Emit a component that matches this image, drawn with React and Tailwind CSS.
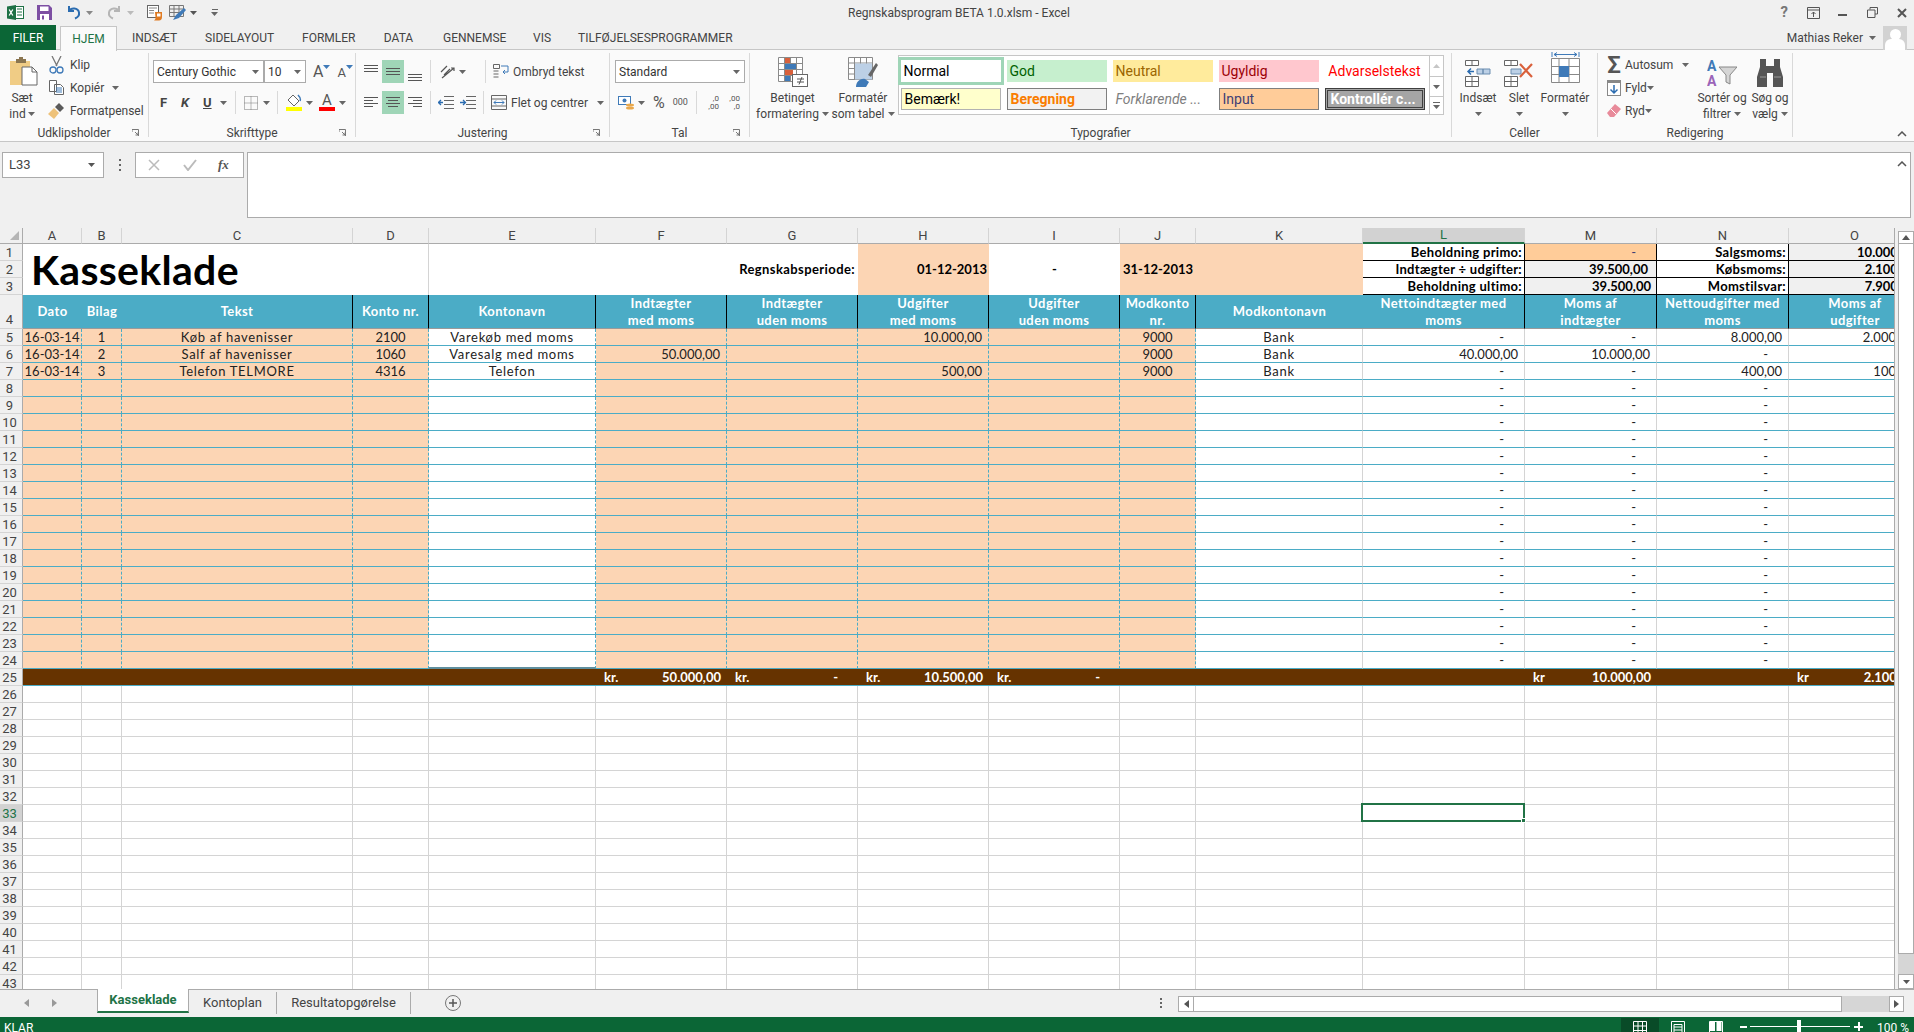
import React from 'react'
import clsx from 'clsx'

const Caret = ({ className, color = '#666' }) => (
    <svg width="7" height="4" viewBox="0 0 7 4" className={clsx('shrink-0', className)}>
        <path d="M0 0h7L3.5 4z" fill={color} />
    </svg>
)

// hairlines icon used all over the alignment group
const Lines = ({ rows, color = '#555', w = 15, h = 15 }) => (
    <svg width={w} height={h} viewBox={`0 0 ${w} ${h}`} className="shrink-0">
        {rows.map(([x, y, l], i) => <rect key={i} x={x} y={y} width={l} height="1" fill={color} />)}
    </svg>
)

const Launcher = () => (
    <svg width="7" height="7" viewBox="0 0 7 7">
        <path d="M0 .5h6.5V7M0 .5V3M3 3l3 3M3.5 6H6V3.5" fill="none" stroke="#777" strokeWidth="1" />
    </svg>
)

const Group = ({ className, label, launcher, children }) => (
    <div className={clsx('flex flex-col h-[84px] border-r border-[#d9d9d9] shrink-0', className)}>
        <div className="h-[72px] flex">{children}</div>
        <div className="h-[12px] flex leading-[16px] text-[12px] text-[#444]">
            <span className="w-[16px]" />
            <span className="flex-1 text-center">{label}</span>
            <span className="w-[16px] pt-[4px]">{launcher && <Launcher />}</span>
        </div>
    </div>
)

const Big = ({ icon, lines, caret, className }) => (
    <div className={clsx('flex flex-col items-center shrink-0 text-[12px] leading-[16px] text-[#444]', className)}>
        <div className="h-[37px] flex items-end justify-center pb-[3px]">{icon}</div>
        {lines.map((l, i) => (
            <div key={i} className="flex items-center gap-[3px] whitespace-nowrap h-[16px]">
                {l}
                {caret && i === lines.length - 1 && <Caret />}
            </div>
        ))}
        {lines.length === 1 && <div className="h-[16px] flex items-center"><Caret /></div>}
    </div>
)

const Small = ({ icon, text, caret, gap = 'gap-[5px]', caretClass }) => (
    <div className={clsx('flex items-center h-[23px] text-[12px] text-[#444] whitespace-nowrap', gap)}>
        <span className="w-[18px] flex justify-center shrink-0">{icon}</span>
        <span>{text}</span>
        {caret && <Caret className={caretClass} />}
    </div>
)

const Select = ({ className, text }) => (
    <div className={clsx('h-[23px] bg-white border border-[#ababab] flex items-center justify-between px-[3px] text-[12px] text-[#333] shrink-0', className)}>
        <span>{text}</span>
        <Caret className="mr-[1px]" />
    </div>
)

const Sep = ({ className }) => <div className={clsx('w-px h-[23px] bg-[#d9d9d9] shrink-0', className)} />

const Style = ({ className, children }) => (
    <div className={clsx('h-[22px] flex items-center px-[3px] text-[14px] leading-none whitespace-nowrap', className)}>{children}</div>
)

const GridIcon = ({ size = 14, color = '#555' }) => (
    <svg width={size} height={size} viewBox="0 0 14 14">
        <path d="M.5.5h13v13H.5zM.5 5h13M.5 9.5h13M5 .5v13M9.5.5v13" fill="none" stroke={color} />
    </svg>
)

const TitleBar = () => (
    <div className="h-[25px] flex items-center relative shrink-0 text-[#444]">
        <svg width="17" height="15" viewBox="0 0 17 15" className="ml-[7px]">
            <rect x="7" y="1.5" width="9.5" height="12" fill="#fff" stroke="#1e7145" />
            <path d="M10 4h5M10 7h5M10 10h5" stroke="#1e7145" />
            <path d="M0 1.5 9 0v15l-9-1.5z" fill="#1e7145" />
            <path d="m2.2 4.5 3.6 6M5.8 4.5l-3.6 6" stroke="#fff" strokeWidth="1.3" />
        </svg>
        <svg width="15" height="15" viewBox="0 0 15 15" className="ml-[13px]">
            <path d="M0 0h12l3 3v12H0z" fill="#7d4fa3" />
            <rect x="3" y="1.5" width="8.5" height="4.5" fill="#fff" />
            <rect x="3" y="9" width="9" height="6" fill="#fff" />
            <rect x="5" y="10.5" width="2" height="4" fill="#7d4fa3" />
        </svg>
        <svg width="15" height="15" viewBox="0 0 15 15" className="ml-[14px]">
            <path d="M3 1v5h5M3 6c2-3.500 9-3.500 10 1.500.5 3-1.500 5-4 6" fill="none" stroke="#2b6cb0" strokeWidth="2" />
        </svg>
        <Caret className="ml-[5px]" color="#888" />
        <svg width="15" height="15" viewBox="0 0 15 15" className="ml-[14px]">
            <path d="M12 1v5H7M12 6C10 2.500 3 2.500 2 7.500c-.5 3 1.500 5 4 6" fill="none" stroke="#b5b5b5" strokeWidth="2" />
        </svg>
        <Caret className="ml-[5px]" color="#bbb" />
        <svg width="17" height="16" viewBox="0 0 17 16" className="ml-[13px]">
            <rect x=".5" y=".5" width="11" height="12" fill="#fff" stroke="#666" />
            <path d="M2 3h8M2 5.500h5M2 8h5" stroke="#888" />
            <path d="M8 7h7v5c0 2-1 3.500-3 3.500H7c1.500-1 1.500-2 1.500-3z" fill="#e07b22" />
            <rect x="10" y="8.500" width="3.500" height="3" fill="#fff" />
        </svg>
        <svg width="18" height="16" viewBox="0 0 18 16" className="ml-[5px]">
            <path d="M.5.5h14v11H.5zM.5 4h14M.5 7.500h14M5 .5v11M10 .5v11" fill="none" stroke="#777" />
            <path d="m4 15 3-5 8-7 2 2-7 8z" fill="#3f7ab8" />
        </svg>
        <Caret className="ml-[3px]" color="#555" />
        <div className="ml-[14px] flex flex-col items-center gap-[2px]">
            <div className="w-[6px] h-px bg-[#666]" />
            <Caret color="#666" />
        </div>
        <span className="absolute left-[848px] top-[5px] text-[12px] leading-[16px] whitespace-nowrap">Regnskabsprogram BETA 1.0.xlsm - Excel</span>
        <div className="ml-auto flex items-center text-[#555]">
            <span className="text-[15px] font-bold leading-none text-[#777] mr-[19px]">?</span>
            <svg width="13" height="12" viewBox="0 0 13 12" className="mr-[18px]">
                <path d="M.5.5h12v11H.5zM.5 3h12M6.500 10V5M4.500 7l2-2 2 2" fill="none" stroke="#555" />
            </svg>
            <div className="w-[9px] h-[2px] bg-[#555] mt-[5px] mr-[20px]" />
            <svg width="11" height="11" viewBox="0 0 11 11" className="mr-[19px]">
                <path d="M3 2.500V.5h7.500V7H8M.5 3h7.500v7.500H.5z" fill="none" stroke="#555" />
            </svg>
            <svg width="10" height="10" viewBox="0 0 10 10" className="mr-[7px]">
                <path d="m1 1 8 8M9 1 1 9" stroke="#555" strokeWidth="2" />
            </svg>
        </div>
    </div>
)

const TabBar = () => (
    <div className="h-[25px] flex items-end shrink-0 text-[12px] text-[#444] relative z-10">
        <div className="w-[56px] h-[25px] bg-[#0b6636] text-white flex items-center justify-center">FILER</div>
        <div className="w-[57px] h-[25px] ml-[4px] -mb-px bg-[#fafafa] border border-b-0 border-[#c6c6c6] text-[#217346] flex items-center justify-center">HJEM</div>
        <div className="h-[25px] flex items-center whitespace-nowrap ml-[15px] gap-[29px]">
            <span className="w-[44px] text-center">INDSÆT</span>
            <span className="w-[68px] text-center">SIDELAYOUT</span>
            <span className="w-[52px] text-center">FORMLER</span>
            <span className="w-[31px] text-center">DATA</span>
            <span className="w-[61px] text-center">GENNEMSE</span>
            <span className="w-[16px] text-center">VIS</span>
            <span className="w-[146px] text-center">TILFØJELSESPROGRAMMER</span>
        </div>
        <div className="ml-auto h-[25px] flex items-center">
            <span className="whitespace-nowrap">Mathias Reker</span>
            <Caret className="ml-[6px] mr-[7px]" />
            <div className="w-[24px] h-[24px] bg-[#d2d2d2] mr-[7px] overflow-hidden flex flex-col items-center">
                <div className="w-[11px] h-[12px] rounded-full bg-white mt-[3px]" />
                <div className="w-[20px] h-[12px] rounded-t-[6px] bg-white -mt-[1px]" />
            </div>
        </div>
    </div>
)

const Ribbon = () => (
    <div className="h-[93px] bg-[#fafafa] border-y border-[#c6c6c6] shrink-0 flex pt-[3px] -mt-px relative">
        <Group className="w-[149px]" label="Udklipsholder" launcher>
            <div className="w-[44px] flex flex-col items-center text-[12px] leading-[16px] text-[#444]">
                <svg width="28" height="29" viewBox="0 0 28 29" className="mt-[4px] ml-[4px] mb-[4px] shrink-0">
                    <path d="M0 4h20v24H0z" fill="#f0cc85" />
                    <path d="M6 2h3V0h4v2h3v4H6z" fill="#8a7550" />
                    <path d="M12 10h10l5 5v13H12z" fill="#fff" stroke="#666" />
                    <path d="M22 10v5h5" fill="none" stroke="#666" />
                </svg>
                <span>Sæt</span>
                <span className="flex items-center gap-[2px]">ind<Caret /></span>
            </div>
            <div className="ml-[3px] flex flex-col">
                <Small text="Klip" icon={
                    <svg width="15" height="18" viewBox="0 0 15 18">
                        <path d="M3 0l5 10M12 0 7 10" stroke="#777" strokeWidth="1.300" />
                        <circle cx="4" cy="14" r="3" fill="none" stroke="#3f7ab8" strokeWidth="1.300" />
                        <circle cx="11" cy="14" r="3" fill="none" stroke="#3f7ab8" strokeWidth="1.300" />
                    </svg>
                } />
                <Small text="Kopiér" caret caretClass="ml-[3px]" icon={
                    <svg width="15" height="15" viewBox="0 0 15 15">
                        <path d="M.5.5h7v11h-7zM5.500 4.500h6l3 3v7h-9z" fill="#fff" stroke="#666" />
                        <path d="M7 8h6M7 10h6M7 12h6" stroke="#3f7ab8" />
                    </svg>
                } />
                <Small text="Formatpensel" icon={
                    <svg width="16" height="16" viewBox="0 0 16 16">
                        <path d="M0 11 6 5l5 5-5 6z" fill="#eec27a" />
                        <path d="m7 4 4-4 5 5-4 4z" fill="#5a5a5a" />
                    </svg>
                } />
            </div>
        </Group>

        <Group className="w-[207px]" label="Skrifttype" launcher>
            <div className="flex flex-col pt-[7px] w-full">
                <div className="flex items-center ml-[4px]">
                    <Select className="w-[111px]" text="Century Gothic" />
                    <Select className="w-[42px]" text="10" />
                    <span className="ml-[7px] flex items-start text-[#555] text-[16px] leading-none">A<Caret className="mt-[1px]" color="#3f7ab8" /></span>
                    <span className="ml-[7px] flex items-start text-[#555] text-[13px] leading-none mt-[2px]">A<Caret className="mt-[-1px]" color="#3f7ab8" /></span>
                </div>
                <div className="flex items-center mt-[8px] h-[23px] text-[#444] text-[13px] font-bold">
                    <span className="ml-[11px] w-[8px]">F</span>
                    <span className="ml-[13px] w-[8px] italic">K</span>
                    <span className="ml-[14px] w-[9px] underline">U</span>
                    <Caret className="ml-[8px]" />
                    <Sep className="ml-[8px]" />
                    <span className="ml-[8px]">
                        <svg width="14" height="14" viewBox="0 0 14 14" className="block">
                            <path d="M.5.500h13v13H.5zM7 .500v13M.5 7h13" fill="none" stroke="#777" strokeDasharray="1 1" />
                        </svg>
                    </span>
                    <Caret className="ml-[5px]" />
                    <Sep className="ml-[7px]" />
                    <span className="ml-[8px] flex flex-col">
                        <svg width="16" height="13" viewBox="0 0 16 13">
                            <path d="m7 1 6 6-5 5-6-6z" fill="#fff" stroke="#666" />
                            <path d="M12 1c2 2 3 4 2 6" fill="none" stroke="#3f7ab8" strokeWidth="1.500" />
                        </svg>
                        <span className="block w-[16px] h-[4px] bg-[#ffff00]" />
                    </span>
                    <Caret className="ml-[4px]" />
                    <span className="ml-[6px] flex flex-col items-center w-[16px] leading-none">
                        <span className="text-[15px] font-normal leading-[13px] text-[#555]">A</span>
                        <span className="block w-[16px] h-[4px] bg-[#ff0000]" />
                    </span>
                    <Caret className="ml-[4px]" />
                </div>
            </div>
        </Group>

        <Group className="w-[254px]" label="Justering" launcher>
            <div className="flex flex-col pt-[7px] w-full">
                <div className="flex items-center h-[23px]">
                    <span className="ml-[8px]"><Lines rows={[[0, 1, 14], [0, 4, 14], [0, 7, 14]]} /></span>
                    <span className="ml-[3px] w-[22px] h-[23px] bg-[#9fd5b7] flex items-center justify-center"><Lines rows={[[0, 4, 14], [0, 7, 14], [0, 10, 14]]} /></span>
                    <span className="ml-[4px] mt-[8px]"><Lines rows={[[0, 6, 14], [0, 9, 14], [0, 12, 14]]} /></span>
                    <Sep className="ml-[7px]" />
                    <svg width="16" height="16" viewBox="0 0 16 16" className="ml-[8px]">
                        <path d="m2 8 6-6M5 11l6-6M3 14 15 4M12 4h3v3" fill="none" stroke="#555" strokeWidth="1.200" />
                    </svg>
                    <Caret className="ml-[4px]" />
                    <Sep className="ml-[19px]" />
                    <svg width="16" height="15" viewBox="0 0 16 15" className="ml-[7px]">
                        <path d="M.5.500h6v4h-6zM.5 7h5M.5 10h5M.5 13h5" fill="none" stroke="#666" />
                        <path d="M8 2h7M15 2v6h-5M12 6 10 8l2 2" fill="none" stroke="#3f7ab8" />
                    </svg>
                    <span className="ml-[4px] text-[12px] text-[#444] whitespace-nowrap">Ombryd tekst</span>
                </div>
                <div className="flex items-center h-[23px] mt-[8px]">
                    <span className="ml-[8px]"><Lines rows={[[0, 2, 14], [0, 5, 9], [0, 8, 14], [0, 11, 9]]} /></span>
                    <span className="ml-[3px] w-[22px] h-[23px] bg-[#9fd5b7] flex items-center justify-center"><Lines rows={[[0, 2, 14], [2, 5, 10], [0, 8, 14], [2, 11, 10]]} /></span>
                    <span className="ml-[4px]"><Lines rows={[[0, 2, 14], [5, 5, 9], [0, 8, 14], [5, 11, 9]]} /></span>
                    <Sep className="ml-[7px]" />
                    <svg width="16" height="13" viewBox="0 0 16 13" className="ml-[7px]">
                        <path d="M6 .5h10M6 4.500h10M6 8.500h10M6 12.500h10" stroke="#666" />
                        <path d="M5 6.500H0M3 4 .5 6.500 3 9" fill="none" stroke="#2b6cb0" strokeWidth="1.300" />
                    </svg>
                    <svg width="16" height="13" viewBox="0 0 16 13" className="ml-[6px]">
                        <path d="M6 .5h10M6 4.500h10M6 8.500h10M6 12.500h10" stroke="#666" />
                        <path d="M0 6.500h5M3 4l2.500 2.500L3 9" fill="none" stroke="#2b6cb0" strokeWidth="1.300" />
                    </svg>
                    <Sep className="ml-[7px]" />
                    <svg width="16" height="15" viewBox="0 0 16 15" className="ml-[7px]">
                        <path d="M.5.500h15v14H.5zM.5 4h15M.5 11h15" fill="none" stroke="#666" />
                        <path d="M3 7.500h10M5 5.500l-2 2 2 2M11 5.500l2 2-2 2" fill="none" stroke="#3f7ab8" />
                    </svg>
                    <span className="ml-[4px] text-[12px] text-[#444] whitespace-nowrap">Flet og centrer</span>
                    <Caret className="ml-[9px]" />
                </div>
            </div>
        </Group>

        <Group className="w-[140px]" label="Tal" launcher>
            <div className="flex flex-col pt-[7px] w-full">
                <Select className="w-[130px] ml-[5px]" text="Standard" />
                <div className="flex items-center h-[23px] mt-[8px] text-[#555]">
                    <svg width="16" height="15" viewBox="0 0 16 15" className="ml-[8px]">
                        <rect x=".5" y="1.500" width="12" height="8" fill="#fff" stroke="#3f7ab8" />
                        <circle cx="6.500" cy="5.500" r="2" fill="#3f7ab8" />
                        <ellipse cx="12" cy="10" rx="4" ry="1.500" fill="#e9a84c" />
                        <ellipse cx="12" cy="13" rx="4" ry="1.500" fill="#e9a84c" />
                    </svg>
                    <Caret className="ml-[4px]" />
                    <span className="ml-[8px] text-[16px] leading-none">%</span>
                    <span className="ml-[8px] text-[9px] leading-none">000</span>
                    <Sep className="ml-[8px]" />
                    <span className="ml-[7px] flex flex-col text-[8px] leading-[8px] w-[15px] items-end"><span>,0</span><span>,00</span></span>
                    <span className="ml-[6px] flex flex-col text-[8px] leading-[8px] w-[15px] items-end"><span>,00</span><span>,0</span></span>
                </div>
            </div>
        </Group>

        <Group className="w-[702px]" label="Typografier">
            <Big className="w-[71px] ml-[7px]" caret lines={['Betinget', 'formatering']} icon={
                <svg width="30" height="30" viewBox="0 0 30 30">
                    <path d="M.5.5h24v24H.5zM.5 6.500h24M.5 12.500h24M.5 18.500h24M6.500.5v24M12.500.5v24M18.500.5v24" fill="#fff" stroke="#8a8a8a" />
                    <rect x="7" y="1" width="5" height="5" fill="#d9603b" />
                    <rect x="7" y="7" width="11" height="5" fill="#3f7ab8" />
                    <rect x="7" y="13" width="8" height="5" fill="#d9603b" />
                    <rect x="7" y="19" width="5" height="5" fill="#3f7ab8" />
                    <rect x="14.500" y="17.500" width="15" height="12" fill="#fff" stroke="#666" />
                    <path d="M19 22h7M19 25h7M24 20l-3 7.500" stroke="#555" fill="none" />
                </svg>
            } />
            <Big className="w-[60px] ml-[5px]" caret lines={['Formatér', 'som tabel']} icon={
                <svg width="30" height="30" viewBox="0 0 30 30">
                    <path d="M.5.500h24v22H.5zM.5 6h24M.5 11.500h24M.5 17h24M6.500.5v22M12.500.5v22M18.500.5v22" fill="#fff" stroke="#8a8a8a" />
                    <rect x="7" y="6.500" width="17" height="16" fill="#bcd0e6" />
                    <path d="m20 18 8-12 2 2-7 12z" fill="#666" />
                    <path d="M8 30c0-5 4-9 9-8l4 3-3 5z" fill="#3f7ab8" />
                </svg>
            } />
            <div className="ml-[5px] mt-[2px] h-[60px] w-[546px] border border-[#c6c6c6] bg-white flex shrink-0">
                <div className="flex-1 grid grid-cols-[repeat(5,100px)] grid-rows-[22px_22px] gap-x-[6px] gap-y-[6px] pl-[1.500px] pt-[4px] relative">
                    <Style className="bg-white outline-[3px] outline-[#9fd5b7] text-[#000]">Normal</Style>
                    <Style className="bg-[#c6efce] text-[#006100]">God</Style>
                    <Style className="bg-[#ffeb9c] text-[#9c6500]">Neutral</Style>
                    <Style className="bg-[#ffc7ce] text-[#9c0006]">Ugyldig</Style>
                    <Style className="text-[#ff0000] justify-center">Advarselstekst</Style>
                    <Style className="bg-[#ffffcc] border border-[#b2b2b2] text-black">Bemærk!</Style>
                    <Style className="bg-[#f2f2f2] border border-[#7f7f7f] text-[#fa7d00] font-bold">Beregning</Style>
                    <Style className="italic text-[#7f7f7f]">Forklarende ...</Style>
                    <Style className="bg-[#ffcc99] border border-[#7f7f7f] text-[#3f3f76]">Input</Style>
                    <Style className="bg-[#a5a5a5] border-[3px] border-double border-[#3f3f3f] text-white font-bold">Kontrollér c...</Style>
                </div>
                <div className="w-[14px] border-l border-[#c6c6c6] flex flex-col shrink-0">
                    <div className="h-[21px] border-b border-[#c6c6c6] flex items-center justify-center"><svg width="7" height="4" viewBox="0 0 7 4"><path d="M0 4h7L3.500 0z" fill="#c6c6c6" /></svg></div>
                    <div className="h-[20px] border-b border-[#c6c6c6] flex items-center justify-center"><Caret /></div>
                    <div className="flex-1 flex flex-col items-center justify-center gap-[2px]"><div className="w-[7px] h-px bg-[#666]" /><Caret /></div>
                </div>
            </div>
        </Group>

        <Group className="w-[146px]" label="Celler">
            <Big className="w-[36px] ml-[8px]" lines={['Indsæt']} icon={
                <svg width="26" height="27" viewBox="0 0 26 27">
                    <path d="M.5.500h13v5H.5zM7 .5v5M.5 16.500h13v10H.5zM.5 21.500h13M7 16.500v10" fill="#fff" stroke="#666" />
                    <path d="M12 9h6v5h-6zM18 9h7v5h-7z" fill="#bcd0e6" stroke="#6b8db0" />
                    <path d="M9 11.500H3M6 8.500l-3 3 3 3" fill="none" stroke="#2b6cb0" strokeWidth="1.500" />
                </svg>
            } />
            <Big className="w-[32px] ml-[7px]" lines={['Slet']} icon={
                <svg width="30" height="27" viewBox="0 0 30 27">
                    <path d="M.5.500h13v5H.5zM7 .5v5M.5 16.500h13v10H.5zM.5 21.500h13M7 16.500v10" fill="#fff" stroke="#666" />
                    <path d="M7 9h10v5H7z" fill="#bcd0e6" stroke="#6b8db0" />
                    <path d="m16 4 12 13M28 4 16 17" stroke="#d9603b" strokeWidth="2.200" />
                </svg>
            } />
            <Big className="w-[50px] ml-[5px]" lines={['Formatér']} icon={
                <svg width="29" height="35" viewBox="0 0 29 35">
                    <path d="M1 0v5M28 0v5M3 2.500h23M3 2.500l3-2M3 2.500l3 2M26 2.500l-3-2M26 2.500l-3 2" fill="none" stroke="#3f7ab8" />
                    <path d="M.5 6.500h28v24H.5zM.5 14.500h28M.5 22.500h28M8 6.500v24M18 6.500v24" fill="#fff" stroke="#888" />
                    <rect x="8" y="14" width="10" height="11" fill="#3f7ab8" />
                </svg>
            } />
        </Group>

        <Group className="w-[195px]" label="Redigering">
            <div className="w-[92px] flex flex-col ml-[7px] shrink-0">
                <Small text="Autosum" caret caretClass="ml-[7px]" gap="gap-[2px]" icon={<span className="text-[24px] font-semibold leading-none text-[#555]">Σ</span>} />
                <Small text="Fyld" caret caretClass="-ml-[2px]" gap="gap-[2px]" icon={
                    <svg width="14" height="16" viewBox="0 0 14 16">
                        <rect x=".5" y=".5" width="13" height="15" fill="#fff" stroke="#888" />
                        <rect x="0" y="0" width="14" height="3" fill="#888" />
                        <path d="M7 5v8M3.500 9.500 7 13l3.500-3.500" fill="none" stroke="#2b6cb0" strokeWidth="1.500" />
                    </svg>
                } />
                <Small text="Ryd" caret caretClass="-ml-[2px]" gap="gap-[2px]" icon={
                    <svg width="14" height="15" viewBox="0 0 14 15">
                        <path d="m0 10 8-9 6 5-7 8H3z" fill="#e88a9a" />
                        <path d="M4 6l5 5" stroke="#fff" />
                    </svg>
                } />
            </div>
            <Big className="w-[50px] shrink-0" caret lines={['Sortér og', 'filtrer']} icon={
                <svg width="30" height="28" viewBox="0 0 30 28">
                    <text x="0" y="12" fontSize="14" fontWeight="700" fill="#3f7ab8" fontFamily="Roboto">A</text>
                    <text x="0" y="27" fontSize="14" fontWeight="700" fill="#9b64b8" fontFamily="Roboto">A</text>
                    <path d="M12 8h18l-7 8v9l-4-2v-7z" fill="#d5d5d5" stroke="#888" />
                </svg>
            } />
            <Big className="w-[42px] ml-[2px] shrink-0" caret lines={['Søg og', 'vælg']} icon={
                <svg width="26" height="28" viewBox="0 0 26 28">
                    <path d="M3 0h6v7h8V0h6v8l3 10v10H16V14h-6v14H0V18L3 8z" fill="#555" />
                    <path d="M3 18h6M17 18h7" stroke="#999" />
                </svg>
            } />
        </Group>

        <div className="flex-1 relative">
            <svg width="10" height="6" viewBox="0 0 10 6" className="absolute right-[7px] top-[78px]">
                <path d="m1 5 4-4 4 4" fill="none" stroke="#555" strokeWidth="1.500" />
            </svg>
        </div>
    </div>
)

const FormulaBar = () => (
    <div className="h-[86px] shrink-0 flex items-start pt-[10px] text-[#444]">
        <div className="ml-[2px] w-[102px] h-[26px] bg-white border border-[#ababab] flex items-center justify-between px-[6px] text-[13px]">
            <span>L33</span>
            <Caret className="mr-[2px]" color="#555" />
        </div>
        <div className="w-[31px] h-[26px] flex flex-col items-center justify-center gap-[3px]">
            <div className="w-[2px] h-[2px] bg-[#666]" /><div className="w-[2px] h-[2px] bg-[#666]" /><div className="w-[2px] h-[2px] bg-[#666]" />
        </div>
        <div className="w-[109px] h-[26px] bg-white border border-[#ababab] flex items-center">
            <svg width="12" height="12" viewBox="0 0 12 12" className="ml-[12px]"><path d="m1 1 10 10M11 1 1 11" stroke="#bbb" strokeWidth="1.500" /></svg>
            <svg width="14" height="12" viewBox="0 0 14 12" className="ml-[23px]"><path d="m1 6 4 5 8-10" fill="none" stroke="#bbb" strokeWidth="2" /></svg>
            <span className="ml-[21px] text-[13px] italic font-bold font-['Liberation_Serif',serif] text-[#555]">fx</span>
        </div>
        <div className="ml-[3px] flex-1 mr-[3px] h-[66px] bg-white border border-[#ababab] flex justify-end pt-[8px] pr-[3px]">
            <svg width="10" height="6" viewBox="0 0 10 6"><path d="m1 5 4-4 4 4" fill="none" stroke="#555" strokeWidth="1.500" /></svg>
        </div>
    </div>
)

const COLS = 'ABCDEFGHIJKLMNO'.split('')
const PEACH = 'ABCDFGHIJ'
const DATA = {
    5: { A: '16-03-14', B: '1', C: 'Køb af havenisser', D: '2100', E: 'Varekøb med moms', H: '10.000,00', J: '9000', K: 'Bank', L: '-', M: '-', N: '8.000,00', O: '2.000,00' },
    6: { A: '16-03-14', B: '2', C: 'Salf af havenisser', D: '1060', E: 'Varesalg med moms', F: '50.000,00', J: '9000', K: 'Bank', L: '40.000,00', M: '10.000,00', N: '-', O: '-' },
    7: { A: '16-03-14', B: '3', C: 'Telefon TELMORE', D: '4316', E: 'Telefon', H: '500,00', J: '9000', K: 'Bank', L: '-', M: '-', N: '400,00', O: '100,00' },
}
const HEADERS = {
    A: ['Dato'], B: ['Bilag'], C: ['Tekst'], D: ['Konto nr.'], E: ['Kontonavn'],
    F: ['Indtægter', 'med moms'], G: ['Indtægter', 'uden moms'], H: ['Udgifter', 'med moms'], I: ['Udgifter', 'uden moms'],
    J: ['Modkonto', 'nr.'], K: ['Modkontonavn'], L: ['Nettoindtægter med', 'moms'], M: ['Moms af', 'indtægter'],
    N: ['Nettoudgifter med', 'moms'], O: ['Moms af', 'udgifter'],
}
const TOTALS = {
    F: ['kr.', '50.000,00'], G: ['kr.', '-'], H: ['kr.', '10.500,00'], I: ['kr.', '-'],
    M: ['kr', '10.000,00'], O: ['kr', '2.100,00'],
}

const RowHead = ({ n, active }) => (
    <div className={clsx(
        'border-r border-b border-[#ababab] border-b-[#d4d4d4] flex justify-center pr-[3px] font-["Roboto"] text-[13px] leading-[17px]',
        n === 4 ? 'items-end' : 'items-center',
        active ? 'bg-[#d2d2d2] text-[#217346]' : 'bg-[#f0f0f0] text-[#444]'
    )}>{n}</div>
)

const ColHead = ({ c }) => (
    <div className={clsx(
        'border-r border-[#d4d4d4] flex items-center justify-center font-["Roboto"] text-[13px]',
        c === 'L' ? 'bg-[#d2d2d2] text-[#217346] border-b-2 border-b-[#217346]' : 'bg-[#f0f0f0] text-[#444] border-b border-b-[#ababab]'
    )}>{c}</div>
)

const BodyCell = ({ c, r }) => {
    const v = (DATA[r] && DATA[r][c]) || (r > 7 && 'LMNO'.includes(c) ? '-' : '')
    const isText = 'CEK'.includes(c)
    const isNum = 'FGHILMNO'.includes(c)
    return (
        <div className={clsx(
            'flex items-center whitespace-nowrap border-r border-b text-[13px] leading-none text-[#222]',
            PEACH.includes(c) ? 'bg-[#fcd5b4]' : 'bg-white',
            r === 24 && c === 'E' ? 'border-b-2 border-b-[#5f8f9e]' : 'border-b-[#4bacc6]',
            'ABCDEFGHIJ'.includes(c) ? 'border-r-[#4bacc6] [border-right-style:dashed]' : 'border-r-[#d4d4d4]',
            isNum ? 'justify-end' : 'justify-center',
            isNum && (v === '-' ? 'pr-[20px]' : 'pr-[6px]'),
            isText && 'tracking-[0.7px]'
        )}>{v}</div>
    )
}

const TotalCell = ({ c }) => {
    const t = TOTALS[c]
    return (
        <div className={clsx(
            'bg-[#663300] text-white font-bold text-[13px] leading-none flex items-center justify-between whitespace-nowrap border-b border-b-[#4bacc6] pl-[8px]',
            t && t[1] === '-' ? 'pr-[20px]' : 'pr-[6px]'
        )}>
            {t && <span>{t[0]}</span>}
            {t && <span>{t[1]}</span>}
        </div>
    )
}

const PlainCell = ({ selected }) => (
    <div className="bg-white border-r border-b border-[#d4d4d4] relative">
        {selected && (
            <div className="absolute -left-[2px] -top-[2px] -right-px -bottom-px border-2 border-[#217346] z-10">
                <div className="absolute -right-[3px] -bottom-[3px] w-[5px] h-[5px] bg-[#217346] border border-white" />
            </div>
        )}
    </div>
)

const Label = ({ children, className }) => (
    <div className={clsx('bg-white flex items-center justify-end pr-[2px] font-bold text-[13px] leading-none tracking-[0.3px] text-black whitespace-nowrap border-b border-black', className)}>{children}</div>
)

const Value = ({ children, className }) => (
    <div className={clsx('flex items-center justify-end pr-[5px] font-bold text-[13px] leading-none text-black whitespace-nowrap border-b border-black', className)}>{children}</div>
)

const Sheet = () => {
    const bodyRows = []
    for (let r = 5; r <= 24; r++) bodyRows.push(r)
    const lowRows = []
    for (let r = 26; r <= 43; r++) lowRows.push(r)

    return (
        <div className="w-[1895px] overflow-hidden border-r border-[#ababab] shrink-0">
            <div className="grid grid-cols-[23px_59px_40px_231px_76px_167px_131px_131px_131px_131px_76px_167px_162px_132px_132px_132px] grid-rows-[16px_17px_17px_17px_34px_repeat(39,17px)] w-[1921px] font-['Lato',sans-serif]">
                <div className="bg-[#f0f0f0] border-r border-b border-[#ababab] flex items-end justify-end pr-[3px] pb-[3px]">
                    <svg width="9" height="9" viewBox="0 0 9 9"><path d="M9 0v9H0z" fill="#b5b5b5" /></svg>
                </div>
                {COLS.map(c => <ColHead key={c} c={c} />)}

                <RowHead n={1} />
                <div className="col-span-4 row-span-3 bg-white border-r border-[#d4d4d4] flex items-center pl-[8px] font-bold text-[41px] leading-none text-black tracking-[0.3px]">Kasseklade</div>
                <div className="col-span-3 row-span-3 bg-white flex items-center justify-end pr-[3px] font-bold text-[13px] tracking-[0.4px] text-black">Regnskabsperiode:</div>
                <div className="row-span-3 bg-[#fcd5b4] flex items-center justify-end pr-[2px] font-bold text-[13px] text-black">01-12-2013</div>
                <div className="row-span-3 bg-white flex items-center justify-center font-bold text-[13px] text-black">-</div>
                <div className="col-span-2 row-span-3 bg-[#fcd5b4] flex items-center pl-[3px] font-bold text-[13px] text-black">31-12-2013</div>
                <Label className="border-r border-r-black">Beholdning primo:</Label>
                <Value className="bg-[#ffcc99] !text-[#3f3f76] pr-[20px] border-r border-r-black font-normal">-</Value>
                <Label className="border-r border-r-black">Salgsmoms:</Label>
                <Value>10.000,00</Value>

                <RowHead n={2} />
                <Label className="border-r border-r-black">Indtægter ÷ udgifter:</Label>
                <Value className="pr-[8px] border-r border-r-black">39.500,00</Value>
                <Label className="border-r border-r-black">Købsmoms:</Label>
                <Value>2.100,00</Value>

                <RowHead n={3} />
                <Label className="border-r border-r-black">Beholdning ultimo:</Label>
                <Value className="border-r border-r-black">39.500,00</Value>
                <Label className="border-r border-r-black">Momstilsvar:</Label>
                <Value>7.900,00</Value>

                <RowHead n={4} />
                {COLS.map(c => (
                    <div key={c} className={clsx(
                        'bg-[#4bacc6] text-white font-bold text-[13px] leading-[17px] tracking-[0.4px] flex flex-col items-center justify-center whitespace-nowrap border-b border-b-[#9a9a9a]',
                        'CDEFGHIJLMN'.includes(c) && 'border-r border-r-black'
                    )}>
                        {HEADERS[c].map(l => <span key={l}>{l}</span>)}
                    </div>
                ))}

                {bodyRows.map(r => (
                    <React.Fragment key={r}>
                        <RowHead n={r} />
                        {COLS.map(c => <BodyCell key={c} c={c} r={r} />)}
                    </React.Fragment>
                ))}

                <RowHead n={25} />
                {COLS.map(c => <TotalCell key={c} c={c} />)}

                {lowRows.map(r => (
                    <React.Fragment key={r}>
                        <RowHead n={r} active={r === 33} />
                        {COLS.map(c => <PlainCell key={c} selected={r === 33 && c === 'L'} />)}
                    </React.Fragment>
                ))}
            </div>
        </div>
    )
}

const VScroll = () => (
    <div className="w-[16px] ml-[3px] flex flex-col pt-[3px] shrink-0">
        <div className="h-[13px] bg-white border border-[#ababab] flex items-center justify-center">
            <svg width="8" height="5" viewBox="0 0 8 5"><path d="M0 5h8L4 0z" fill="#555" /></svg>
        </div>
        <div className="h-[710px] bg-white border-x border-b border-[#ababab]" />
        <div className="flex-1 bg-[#d6d6d6]" />
        <div className="h-[15px] bg-white border border-[#ababab] flex items-center justify-center">
            <Caret color="#555" />
        </div>
    </div>
)

const SheetTabs = () => (
    <div className="h-[28px] border-t border-[#ababab] flex shrink-0 text-[13px] text-[#444]">
        <svg width="5" height="8" viewBox="0 0 5 8" className="ml-[24px] mt-[9px]"><path d="M5 0v8L0 4z" fill="#999" /></svg>
        <svg width="5" height="8" viewBox="0 0 5 8" className="ml-[23px] mt-[9px]"><path d="M0 0v8l5-4z" fill="#999" /></svg>
        <div className="ml-[40px] w-[92px] h-[24px] -mt-px bg-white border-x border-[#ababab] border-b-2 border-b-[#217346] text-[#217346] font-bold flex items-center justify-center">Kasseklade</div>
        <div className="w-[88px] h-[22px] mt-[2px] border-r border-[#ababab] flex items-center justify-center">Kontoplan</div>
        <div className="w-[134px] h-[22px] mt-[2px] border-r border-[#ababab] flex items-center justify-center">Resultatopgørelse</div>
        <svg width="16" height="16" viewBox="0 0 16 16" className="ml-[34px] mt-[5px]">
            <circle cx="8" cy="8" r="7.500" fill="none" stroke="#777" />
            <path d="M8 4v8M4 8h8" stroke="#555" strokeWidth="1.500" />
        </svg>
        <div className="ml-[690px] w-[20px] flex flex-col items-center justify-center gap-[2px] h-[26px]">
            <div className="w-[2px] h-[2px] bg-[#666]" /><div className="w-[2px] h-[2px] bg-[#666]" /><div className="w-[2px] h-[2px] bg-[#666]" />
        </div>
        <div className="ml-[7px] mt-[6px] w-[726px] h-[16px] flex bg-[#d6d6d6]">
            <div className="w-[16px] bg-white border border-[#ababab] flex items-center justify-center">
                <svg width="5" height="8" viewBox="0 0 5 8"><path d="M5 0v8L0 4z" fill="#555" /></svg>
            </div>
            <div className="w-[648px] bg-white border border-l-0 border-[#ababab]" />
            <div className="w-[47px]" />
            <div className="w-[15px] bg-white border border-[#ababab] flex items-center justify-center">
                <svg width="5" height="8" viewBox="0 0 5 8"><path d="M0 0v8l5-4z" fill="#555" /></svg>
            </div>
        </div>
    </div>
)

const StatusBar = () => (
    <div className="h-[22px] bg-[#0b6636] text-white flex items-start shrink-0 text-[12px]">
        <span className="ml-[4px] mt-[3px] leading-[16px]">KLAR</span>
        <div className="ml-auto flex items-start">
            <div className="w-[38px] h-[22px] mt-px bg-[#094b28] flex justify-center pt-[3px]"><GridIcon color="#fff" /></div>
            <svg width="14" height="16" viewBox="0 0 14 16" className="ml-[12px] mt-[4px]">
                <path d="M.5.5h13v15H.5zM3 3.500h8v9H3zM3 6h8M3 9h8" fill="none" stroke="#fff" />
            </svg>
            <svg width="14" height="16" viewBox="0 0 14 16" className="ml-[24px] mt-[4px]">
                <path d="M.5.5h13v15H.5z" fill="none" stroke="#fff" />
                <rect x="1" y="1" width="5" height="9" fill="#fff" />
                <rect x="7.500" y="1" width="5" height="9" fill="#fff" />
            </svg>
            <div className="ml-[17px] mt-[9px] w-[7px] h-[2px] bg-white" />
            <div className="ml-[3px] mt-[9px] w-[100px] h-px bg-white relative">
                <div className="absolute left-[47px] -top-[6px] w-[4px] h-[13px] bg-white" />
            </div>
            <div className="ml-[4px] mt-[5px] w-[9px] h-[9px] relative">
                <div className="absolute left-0 top-[3.500px] w-[9px] h-[2px] bg-white" />
                <div className="absolute left-[3.500px] top-0 w-[2px] h-[9px] bg-white" />
            </div>
            <span className="ml-[14px] mr-[5px] mt-[3px] leading-[16px] whitespace-nowrap">100 %</span>
        </div>
    </div>
)

export default function App() {
    return (
        <div className="w-[1914px] h-[1032px] overflow-hidden bg-[#f0f0f0] flex flex-col font-['Roboto',sans-serif]">
            <TitleBar />
            <TabBar />
            <Ribbon />
            <FormulaBar />
            <div className="h-[761px] flex overflow-hidden shrink-0">
                <Sheet />
                <VScroll />
            </div>
            <SheetTabs />
            <StatusBar />
        </div>
    )
}
